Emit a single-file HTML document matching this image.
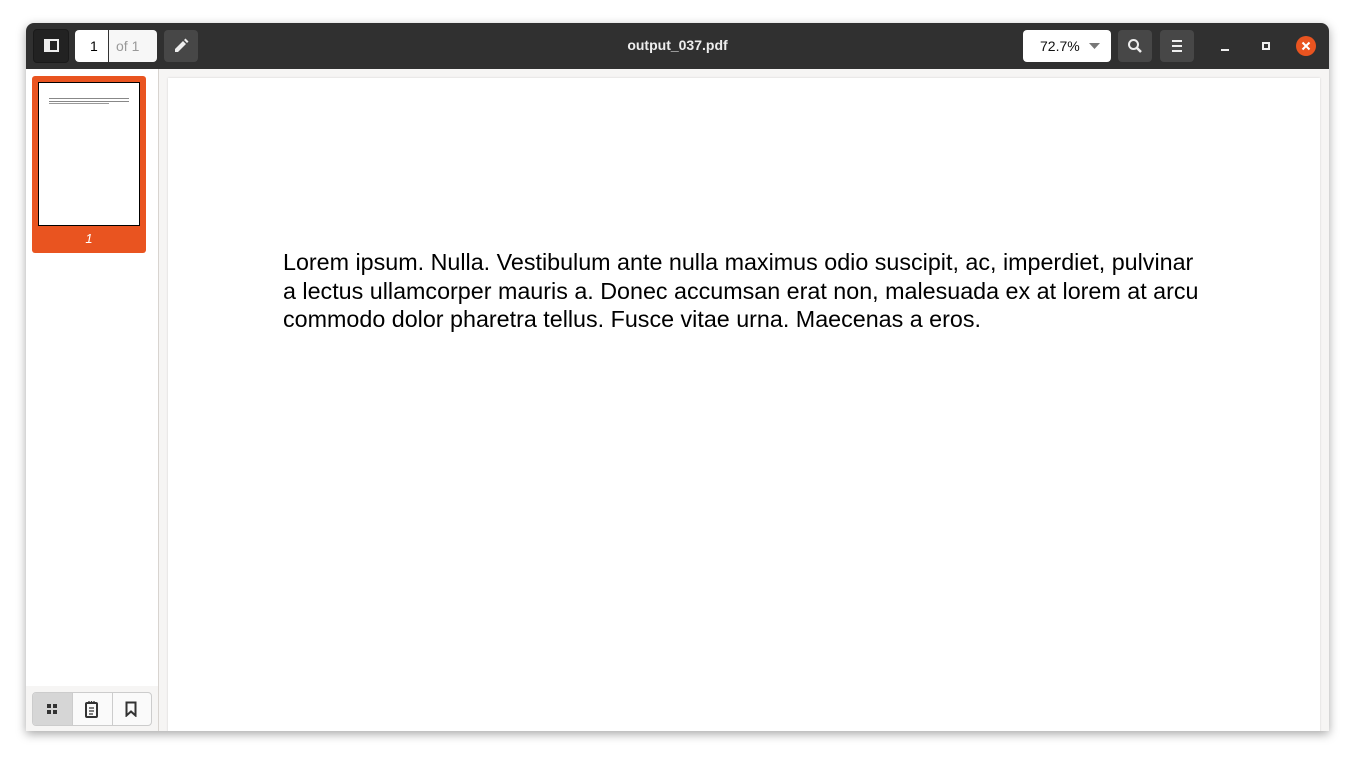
<!DOCTYPE html>
<html><head><style>
body{margin:0;width:1355px;height:761px;background:#fff;position:relative;overflow:hidden;font-family:"Liberation Sans",sans-serif}
.win{position:absolute;left:26px;top:23px;width:1303px;height:708px;background:#f6f5f4;border-radius:8px 8px 0 0;box-shadow:0 3px 10px rgba(0,0,0,.35);overflow:hidden}
.hdr{position:absolute;left:0;top:0;width:1303px;height:46px;background:#303030}
.btn{position:absolute;top:7px;height:32px;border-radius:4px;background:#474747}
.side{position:absolute;left:0;top:46px;width:132px;height:662px;background:#fff;border-right:1px solid #d8d4d0}
.page{position:absolute;left:142px;top:55px;width:1152px;height:660px;background:#fff;box-shadow:0 0 2px rgba(0,0,0,.15)}
.txt{position:absolute;left:257px;top:225px;font-size:23.3px;line-height:28.5px;color:#000;white-space:nowrap}
</style></head><body>
<div class="win">
 <div class="hdr">
  <div class="btn" style="left:7px;width:34px;background:#222;border:1px solid #1a1a1a;top:6px"><svg width="34" height="32"><rect x="11" y="10" width="13" height="11" fill="none" stroke="#eee" stroke-width="2"/><rect x="11" y="10" width="5" height="11" fill="#eee"/></svg></div>
  <div style="position:absolute;left:49px;top:7px;width:81px;height:32px;background:#fff;border-radius:4px"></div>
  <div style="position:absolute;left:82px;top:7px;width:48px;height:32px;background:#f7f7f7;border-left:1px solid #333;border-radius:0 4px 4px 0"></div>
  <div style="position:absolute;left:64px;top:15px;font-size:14px;color:#000">1</div>
  <div style="position:absolute;left:90px;top:15px;font-size:14px;color:#999">of 1</div>
  <div class="btn" style="left:138px;width:34px"><svg width="34" height="32"><path d="M11 22 L11 19 L19 11 L22 14 L14 22 Z M20 10 L21.5 8.5 L24.5 11.5 L23 13 Z" fill="#eee"/></svg></div>
  <div style="position:absolute;left:0;width:1303px;top:14px;text-align:center;color:#eee;font-weight:bold;font-size:14px">output_037.pdf</div>
  <div style="position:absolute;left:997px;top:7px;width:88px;height:32px;background:#fff;border-radius:4px"></div>
  <div style="position:absolute;left:1014px;top:15px;font-size:14px;color:#111">72.7%</div>
  <svg style="position:absolute;left:1063px;top:20px" width="12" height="7"><path d="M0 0 L11 0 L5.5 6Z" fill="#777"/></svg>
  <div class="btn" style="left:1092px;width:34px"><svg width="34" height="32"><circle cx="15.5" cy="14.5" r="4.5" fill="none" stroke="#eee" stroke-width="2"/><path d="M19 18 L23 22" stroke="#eee" stroke-width="2.5"/></svg></div>
  <div class="btn" style="left:1134px;width:34px"><svg width="34" height="32"><path d="M12 11h10M12 16h10M12 21h10" stroke="#eee" stroke-width="2"/></svg></div>
  <div style="position:absolute;left:1195px;top:26px;width:8px;height:2px;background:#eee"></div>
  <div style="position:absolute;left:1236px;top:19px;width:4px;height:4px;border:2px solid #eee"></div>
  <div style="position:absolute;left:1270px;top:13px;width:20px;height:20px;border-radius:50%;background:#e95420"><svg width="20" height="20"><path d="M6.5 6.5 L13.5 13.5 M13.5 6.5 L6.5 13.5" stroke="#fff" stroke-width="2"/></svg></div>
 </div>
 <div class="side">
  <div style="position:absolute;left:6px;top:7px;width:114px;height:177px;background:#e95420;border-radius:3px"></div>
  <div style="position:absolute;left:12px;top:13px;width:100px;height:142px;background:#fff;border:1px solid #000">
   <div style="position:absolute;left:10px;top:15px;width:80px;border-top:1px solid #888;border-bottom:1px solid #888;height:2px"></div>
   <div style="position:absolute;left:10px;top:20px;width:60px;height:1px;background:#999"></div>
  </div>
  <div style="position:absolute;left:0;width:126px;top:162px;text-align:center;color:#fff;font-style:italic;font-size:13px">1</div>
  <div style="position:absolute;left:0;top:617px;width:132px;height:45px;background:#f6f5f4"></div>
  <div style="position:absolute;left:6px;top:623px;width:118px;height:32px;border:1px solid #ccc;border-radius:4px;background:#fafafa;overflow:hidden">
   <div style="position:absolute;left:0;top:0;width:39px;height:32px;background:#d6d6d6;border-right:1px solid #ccc"></div>
   <div style="position:absolute;left:79px;top:0;width:1px;height:32px;background:#ccc"></div>
   <svg style="position:absolute;left:13px;top:10px" width="12" height="12"><rect x="1" y="1" width="4" height="4" fill="#333"/><rect x="7" y="1" width="4" height="4" fill="#333"/><rect x="1" y="7" width="4" height="4" fill="#333"/><rect x="7" y="7" width="4" height="4" fill="#333"/></svg>
   <svg style="position:absolute;left:51px;top:7px" width="16" height="18"><rect x="2" y="3" width="11" height="14" rx="1" fill="none" stroke="#333" stroke-width="2"/><path d="M5 1v3M7.5 1v3M10 1v3M5 8h5M5 11h5M5 14h4" stroke="#333" stroke-width="1.3"/></svg>
   <svg style="position:absolute;left:92px;top:8px" width="12" height="16"><path d="M1.5 1.5h9v13l-4.5-4-4.5 4z" fill="none" stroke="#333" stroke-width="2"/></svg>
  </div>
 </div>
 <div class="page"></div>
 <div class="txt">Lorem ipsum. Nulla. Vestibulum ante nulla maximus odio suscipit, ac, imperdiet, pulvinar<br>a lectus ullamcorper mauris a. Donec accumsan erat non, malesuada ex at lorem at arcu<br>commodo dolor pharetra tellus. Fusce vitae urna. Maecenas a eros.</div>
</div>
</body></html>
